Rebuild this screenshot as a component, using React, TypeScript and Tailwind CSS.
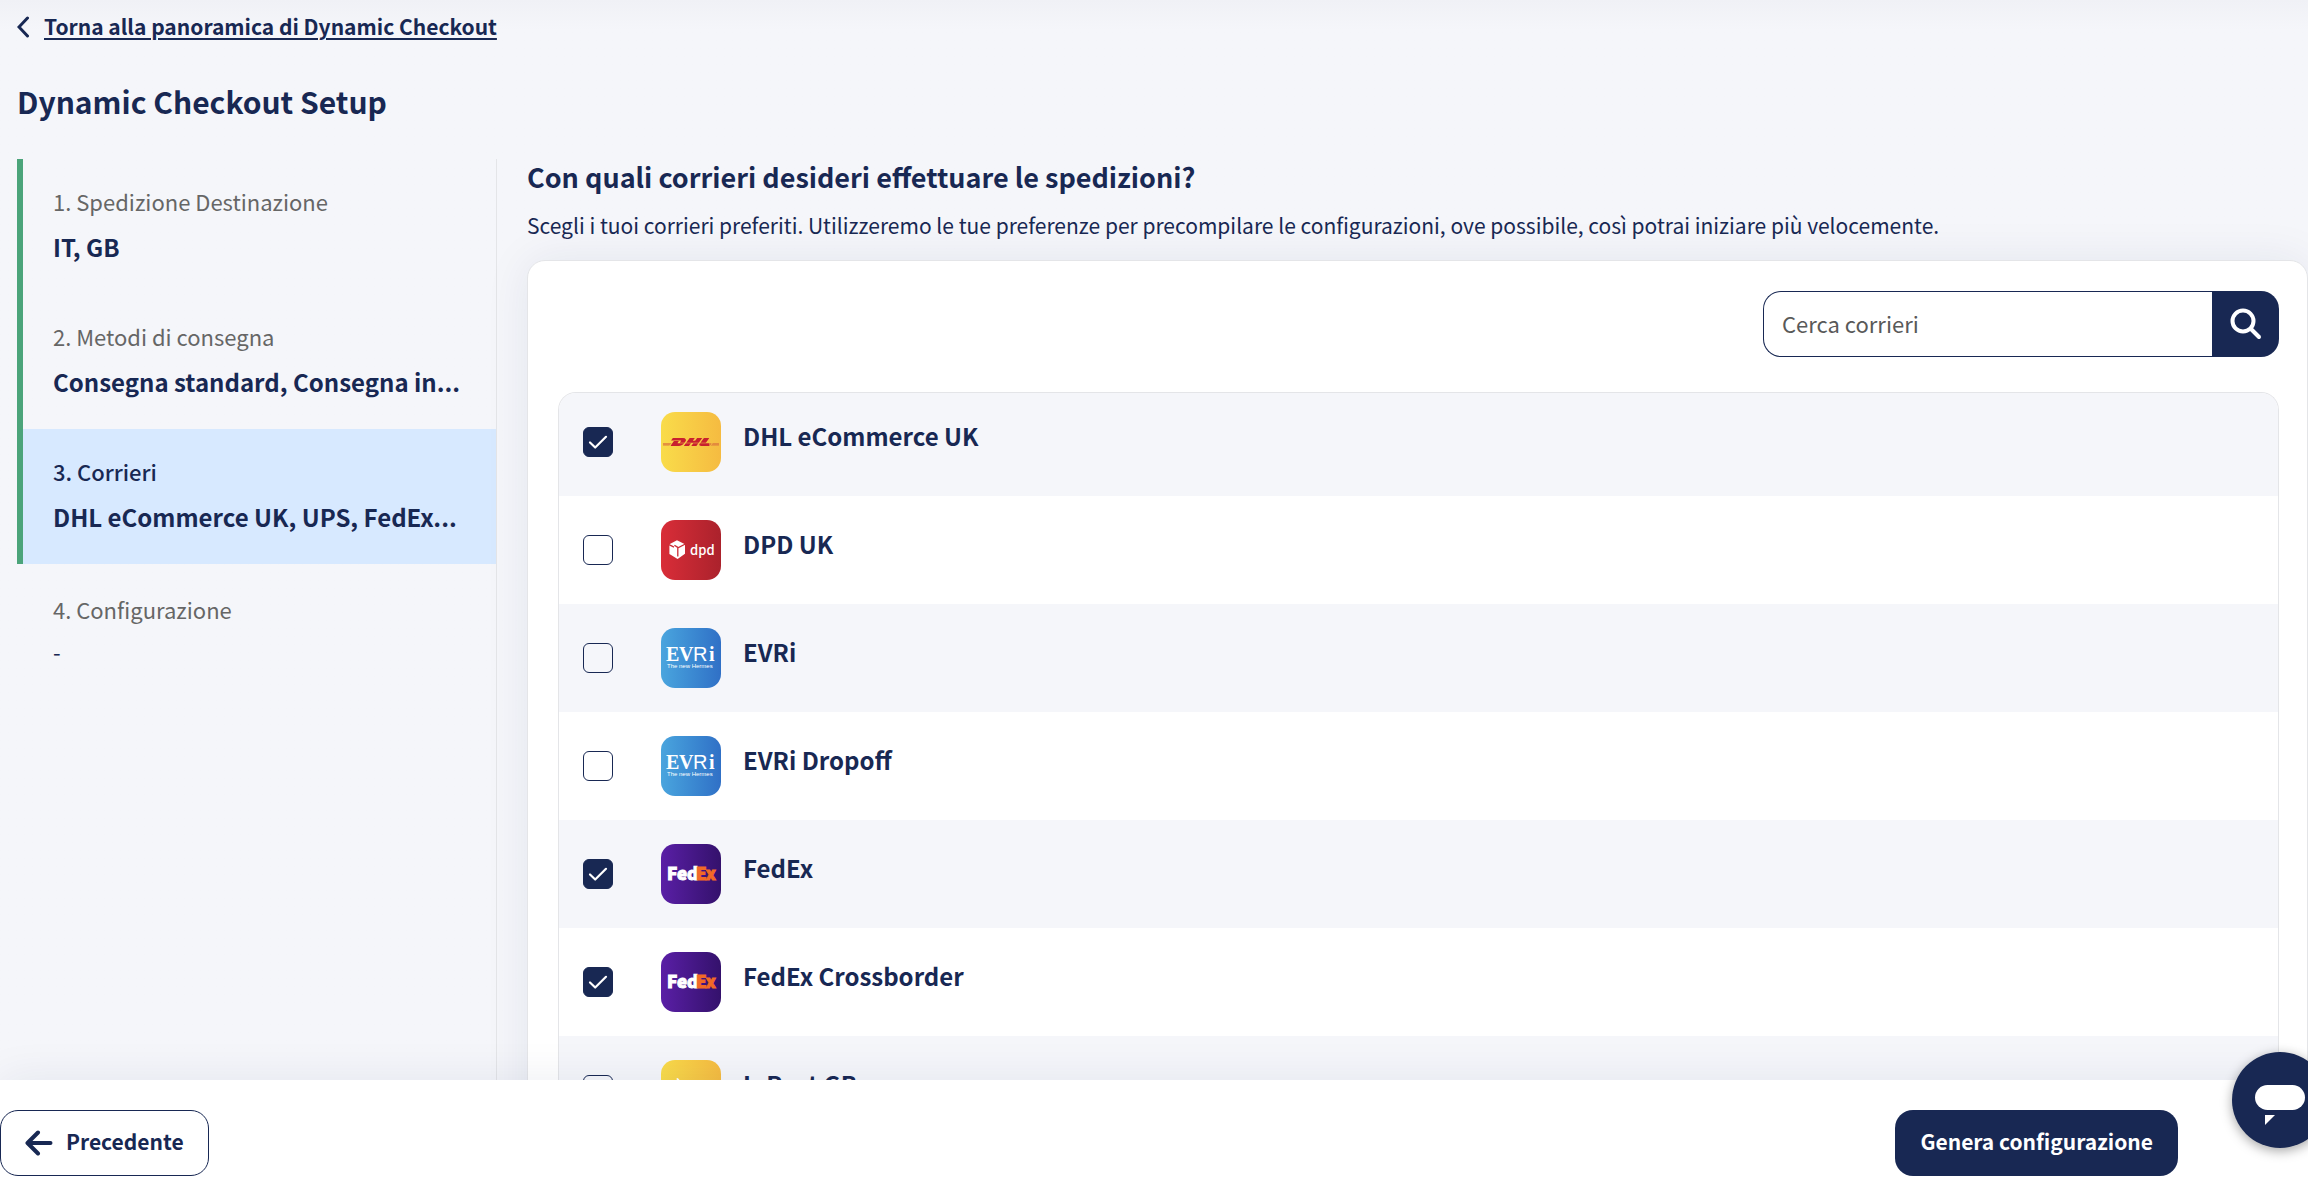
import { useState } from 'react';
import clsx from 'clsx';
import { SiDhl } from 'react-icons/si';

const steps = [
  { title: '1. Spedizione Destinazione', value: 'IT, GB', done: true },
  { title: '2. Metodi di consegna', value: 'Consegna standard, Consegna in...', done: true },
  { title: '3. Corrieri', value: 'DHL eCommerce UK, UPS, FedEx...', done: true, active: true },
  { title: '4. Configurazione', value: '-' },
];

const carriers = [
  { id: 'dhl-ecommerce-uk', name: 'DHL eCommerce UK', logo: DhlLogo, checked: true },
  { id: 'dpd-uk', name: 'DPD UK', logo: DpdLogo },
  { id: 'evri', name: 'EVRi', logo: EvriLogo },
  { id: 'evri-dropoff', name: 'EVRi Dropoff', logo: EvriLogo },
  { id: 'fedex', name: 'FedEx', logo: FedexLogo, checked: true },
  { id: 'fedex-crossborder', name: 'FedEx Crossborder', logo: FedexLogo, checked: true },
  { id: 'inpost-gb', name: 'InPost GB', logo: InpostLogo },
];

function DhlLogo() {
  return (
    <div className="flex size-[60px] items-center justify-center rounded-[14px] bg-linear-to-r from-[#f9dc4a] to-[#f5bb41]">
      <svg width="0" height="0" className="absolute">
        <linearGradient id="dhl-fill">
          <stop offset="0.15" stopColor="#dd7a3c" />
          <stop offset="0.15" stopColor="#c8202f" />
          <stop offset="0.83" stopColor="#c8202f" />
          <stop offset="0.83" stopColor="#dd7a3c" />
        </linearGradient>
      </svg>
      <SiDhl size={56} fill="url(#dhl-fill)" />
    </div>
  );
}

function DpdLogo() {
  return (
    <div className="size-[60px] rounded-[14px] bg-linear-to-r from-[#d92d38] to-[#ab222c]">
      <svg viewBox="0 0 60 60" className="size-full">
        <path fill="#fff" d="M8.4 24.2 16 20.2l8 4v9.6L16.6 39 8.4 34z" />
        <path fill="none" stroke="#cc2b35" strokeWidth="1.3" d="m8 24.6 5 2.6M24.4 24 16.8 28v8.6M13.4 25.2l3.4 2.2" />
        <text x="29" y="35" fill="#fff" fontSize="13" fontWeight="500" fontFamily="'Noto Sans CJK SC', sans-serif">dpd</text>
      </svg>
    </div>
  );
}

function EvriLogo() {
  return (
    <div className="size-[60px] rounded-[14px] bg-linear-to-r from-[#4aa5de] to-[#3070c6]">
      <svg viewBox="0 0 60 60" className="size-full" fill="#fff">
        <g fontFamily="'Liberation Serif', serif" fontWeight="700" fontSize="20">
          <text x="5" y="33">E</text>
          <text x="18" y="33">V</text>
          <text x="48" y="33">i</text>
        </g>
        <text x="32" y="33" fontFamily="'Liberation Sans', sans-serif" fontSize="20">R</text>
        <text x="6" y="40" fontFamily="'Liberation Sans', sans-serif" fontSize="6">The new Hermes</text>
      </svg>
    </div>
  );
}

function FedexLogo() {
  return (
    <div className="size-[60px] rounded-[14px] bg-linear-to-r from-[#5a1fa6] to-[#34116c]">
      <svg viewBox="0 0 60 60" className="size-full" fontFamily="'Noto Sans CJK SC', sans-serif" fontWeight="900" fontSize="17" strokeWidth="1">
        <text x="6" y="36" fill="#fff" stroke="#fff">Fed</text>
        <text x="35" y="36" fill="#f26a26" stroke="#f26a26">Ex</text>
      </svg>
    </div>
  );
}

function InpostLogo() {
  return (
    <div className="size-[60px] rounded-[14px] bg-linear-to-r from-[#f9dc4a] to-[#f5bb41]">
      <svg viewBox="0 0 60 60" className="size-full">
        <path fill="none" stroke="#fff" strokeWidth="2" strokeLinecap="round" d="m16.5 19 3 4M11 24l5 2.5M9.500 31h6M11 38l5-2.500M16.500 43l3-4" />
        <text x="22" y="36" fill="#fff" fontSize="12" fontWeight="700" fontFamily="'Noto Sans CJK SC', sans-serif">InPost</text>
      </svg>
    </div>
  );
}

function StepItem({ title, value, done, active }: { title: string; value: string; done?: boolean; active?: boolean }) {
  return (
    <li
      className={clsx(
        'border-l-[6px] pb-7 pr-[30px] pl-[30px]',
        done ? 'border-[#4ba47a] pt-[23px]' : 'border-transparent pt-[26px]',
        active && 'bg-[#d7e9ff]'
      )}
    >
      <p className={clsx('text-[22px] leading-[38px]', active ? 'font-medium' : 'text-[#666]')}>{title}</p>
      <p className={clsx('mt-2 truncate', done ? 'text-[24px] leading-[38px] font-bold' : 'text-[22px] leading-[30px]')}>
        {value}
      </p>
    </li>
  );
}

export default function App() {
  const [selected, setSelected] = useState(carriers.filter((c) => c.checked).map((c) => c.id));

  const toggle = (id: string) =>
    setSelected((prev) => (prev.includes(id) ? prev.filter((c) => c !== id) : [...prev, id]));

  return (
    <div className="flex h-screen flex-col overflow-hidden bg-[#f5f6fa] font-['Noto_Sans_CJK_SC',sans-serif] text-[#182853]">
      <main className="flex min-h-0 flex-1 flex-col overflow-hidden bg-linear-to-b from-[#f0f1f6] to-[#f5f6fa] to-[30px] pl-[17px]">
        <a href="#" className="flex items-center gap-[15px] self-start pt-2 text-[21px] leading-[36px] font-bold">
          <svg width="12" height="22" viewBox="0 0 12 22" fill="none" stroke="currentColor" strokeWidth="3" strokeLinecap="round">
            <path d="M10.500 2 2 11l8.500 9" />
          </svg>
          <span className="pb-[2px] underline decoration-2 underline-offset-[3px]">Torna alla panoramica di Dynamic Checkout</span>
        </a>
        <h1 className="mt-[31px] text-[30px] leading-[48px] font-bold">Dynamic Checkout Setup</h1>

        <div className="mt-[34px] flex min-h-0 flex-1">
          <ol className="w-[480px] shrink-0 border-r border-[#e4e5e8]">
            {steps.map((step) => (
              <StepItem key={step.title} {...step} />
            ))}
          </ol>

          <section className="min-w-0 flex-1 pl-[30px]">
            <h2 className="text-[27px] leading-[36px] font-bold">Con quali corrieri desideri effettuare le spedizioni?</h2>
            <p className="mt-[11px] text-[21px] leading-[38px]">
              Scegli i tuoi corrieri preferiti. Utilizzeremo le tue preferenze per precompilare le configurazioni, ove
              possibile, così potrai iniziare più velocemente.
            </p>

            <div className="mt-4 rounded-[18px] border border-[#e4e5e8] bg-white pt-[30px] pr-7 pl-[30px] shadow-[0_0_45px_rgba(24,40,83,0.08)]">
              <form className="ml-auto flex h-[66px] w-[516px]" onSubmit={(e) => e.preventDefault()}>
                <input
                  type="text"
                  aria-label="Cerca corrieri"
                  placeholder="Cerca corrieri"
                  className="min-w-0 flex-1 rounded-l-[18px] border border-r-0 border-[#182853] px-[18px] pb-[2px] text-[22px] outline-none placeholder:text-[#595959]"
                />
                <button type="submit" aria-label="Cerca" className="flex w-[67px] items-center justify-center rounded-r-[18px] bg-[#182853] text-white">
                  <svg width="32" height="32" viewBox="0 0 32 32" fill="none" stroke="currentColor" strokeWidth="4" strokeLinecap="round">
                    <circle cx="13" cy="13" r="10.500" />
                    <path d="m21 21 8 8" />
                  </svg>
                </button>
              </form>

              <ul className="mt-[35px] overflow-hidden rounded-t-[18px] border border-b-0 border-[#e4e5e8]">
                {carriers.map(({ id, name, logo: Logo }) => (
                  <li key={id} className="odd:bg-[#f5f6fa]">
                    <label htmlFor={id} className={clsx('flex items-start px-6 pb-6', id === carriers[0].id ? 'pt-[19px]' : 'pt-6')}>
                      <span className="mt-[15px] grid size-[30px] shrink-0">
                        <input
                          id={id}
                          type="checkbox"
                          checked={selected.includes(id)}
                          onChange={() => toggle(id)}
                          className="peer col-start-1 row-start-1 size-[30px] appearance-none rounded-[6px] border border-[#182853] checked:bg-[#182853]"
                        />
                        <svg viewBox="0 0 30 30" className="pointer-events-none col-start-1 row-start-1 hidden size-[30px] peer-checked:block" fill="none" stroke="#fff" strokeWidth="2.200" strokeLinecap="round" strokeLinejoin="round">
                          <path d="m7 15.500 5.200 5L23 9.800" />
                        </svg>
                      </span>
                      <span className="ml-12 shrink-0">
                        <Logo />
                      </span>
                      <span className="ml-[22px] pt-[5px] text-[24px] leading-[38px] font-bold">{name}</span>
                    </label>
                  </li>
                ))}
              </ul>
            </div>
          </section>
        </div>
      </main>

      <footer className="relative flex shrink-0 items-center justify-between bg-white pt-[30px] pr-[130px] pb-[2px] shadow-[0_0_45px_rgba(24,40,83,0.08)]">
        <button type="button" className="flex h-[66px] items-center gap-[13px] rounded-[18px] border border-[#182853] px-6 text-[21px] font-bold">
          <svg width="28" height="26" viewBox="0 0 28 26" fill="none" stroke="currentColor" strokeWidth="4" strokeLinecap="round" strokeLinejoin="round">
            <path d="M13 2.500 2.500 13 13 23.500M3 13h22.500" />
          </svg>
          <span className="pb-[2px]">Precedente</span>
        </button>
        <button type="button" className="h-[66px] rounded-[18px] bg-[#182853] px-[25px] pb-[2px] text-[21px] font-bold text-white">
          Genera configurazione
        </button>
      </footer>

      <button
        type="button"
        aria-label="Chat"
        className="fixed -right-5 bottom-[30px] size-24 rounded-full bg-[#182853] shadow-[0_3px_12px_rgba(0,0,0,0.35)]"
      >
        <svg viewBox="0 0 96 96" fill="#fff">
          <rect x="23" y="33" width="50" height="25" rx="12.500" />
          <path d="M33 63h10L33 73z" />
        </svg>
      </button>
    </div>
  );
}
